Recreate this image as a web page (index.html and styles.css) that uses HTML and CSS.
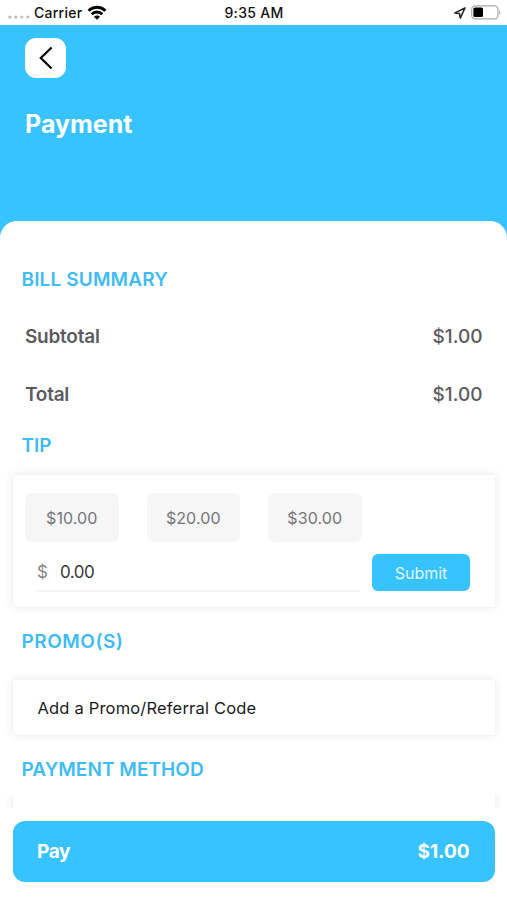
FILE: index.html
```html
<!DOCTYPE html>
<html lang="en">
<head>
<meta charset="utf-8">
<title>Payment</title>
<link rel="stylesheet" href="styles.css">
</head>
<body>
<div class="screen">
  <div class="status">
    <div class="status-left">
      <svg class="signal" width="22" height="4" viewBox="0 0 22 4" fill="#bdbdbd"><circle cx="1.8" cy="2" r="1.6"/><circle cx="7.8" cy="2" r="1.6"/><circle cx="13.8" cy="2" r="1.6"/><circle cx="19.8" cy="2" r="1.6"/></svg>
      <span class="carrier">Carrier</span>
      <svg class="wifi" width="20" height="15" viewBox="0 0 20 15" fill="none" stroke="#000" stroke-width="2.9"><path d="M1.6 5.7a12 12 0 0 1 16.8 0"/><path d="M4.7 9.2a7.6 7.6 0 0 1 10.6 0"/><path d="M10 14.8 6.9 11.7a4.4 4.4 0 0 1 6.2 0z" fill="#000" stroke="none"/></svg>
    </div>
    <span class="clock">9:35 AM</span>
    <div class="status-right">
      <svg width="12" height="12" viewBox="0 0 12 12" fill="none" stroke="#222" stroke-width="1.5" stroke-linejoin="round"><path d="M11 1 .9 5.9l4.6.7.8 4.5z"/></svg>
      <svg class="battery" width="30" height="15" viewBox="0 0 30 15"><rect x=".7" y=".8" width="26.2" height="13" rx="3.6" fill="#fff" stroke="#aaa" stroke-width="1.2"/><rect x="2.4" y="2.5" width="9.6" height="9.6" rx="1.6"/><path d="M28.2 5v4.6c1.6-.7 1.6-3.9 0-4.6z" fill="#aaa"/></svg>
    </div>
  </div>
  <header class="hero">
    <button class="back" aria-label="Back"><svg width="14" height="24" viewBox="0 0 14 24" fill="none" stroke="#000" stroke-width="2.2"><path d="M12.6 1.5 1.8 12l10.8 10.5"/></svg></button>
    <h1><span>Payment</span></h1>
  </header>
  <main class="sheet">
    <h2 class="bill">BILL SUMMARY</h2>
    <div class="line"><span class="label">Subtotal</span><span class="amount">$1.00</span></div>
    <div class="line"><span class="label">Total</span><span class="amount">$1.00</span></div>
    <h2 class="tip">TIP</h2>
    <section class="card tips">
      <div class="presets"><button>$10.00</button><button>$20.00</button><button>$30.00</button></div>
      <div class="custom">
        <div class="field"><span class="currency">$</span><span class="value">0.00</span></div>
        <button class="submit">Submit</button>
      </div>
    </section>
    <h2 class="promos">PROMO(S)</h2>
    <section class="card promo"><span>Add a Promo/Referral Code</span></section>
    <h2 class="method">PAYMENT METHOD</h2>
    <div class="methods-clip"><section class="card methods"></section></div>
  </main>
  <footer class="footer">
    <button class="pay"><span class="pay-label">Pay</span><span>$1.00</span></button>
  </footer>
</div>
</body>
</html>
```
FILE: styles.css
```css
* { box-sizing: border-box; }
body { margin: 0; background: #fff; font-family: Inter, "Liberation Sans", sans-serif; }
button { border: 0; padding: 0; font: inherit; color: inherit; }
h1, h2 { margin: 0; }
svg { display: block; flex: none; }
.screen { width: 507px; height: 900px; display: flex; flex-direction: column; overflow: hidden; background: #36c3ff; }
.status { height: 25px; flex: none; display: grid; grid-template-columns: 1fr auto 1fr; align-items: center; padding: 0 6px 0 8px; background: #fff; font-size: 14px; font-weight: 500; color: #111; }
.status-left { display: flex; align-items: center; }
.signal { margin-top: 8px; }
.carrier { margin-left: 4px; letter-spacing: .25px; }
.clock { letter-spacing: .3px; margin-right: 1px; }
.wifi { margin-left: 5px; }
.status-right { display: flex; align-items: center; justify-content: flex-end; gap: 5px; }
.hero { height: 196px; flex: none; padding: 13px 25px; }
.back { width: 41px; height: 40px; border-radius: 11px; background: #fff; display: flex; align-items: center; justify-content: center; }
h1 { margin-top: 29px; font-size: 25px; line-height: 34px; font-weight: 700; color: #fff; }
.sheet { flex: 1; min-height: 0; overflow: hidden; background: #fff; border-radius: 17px 17px 0 0; padding: 44px 12.5px 0; }
h2 { height: 30px; line-height: 30px; padding-left: 9px; font-size: 19px; font-weight: 600; color: #3fbcf8; }
.line { height: 58.5px; display: flex; align-items: center; justify-content: space-between; padding: 0 12px 0 12.5px; color: #5c5a60; font-size: 19px; }
.bill { margin-bottom: 12px; letter-spacing: .15px; }
.label { font-weight: 600; letter-spacing: -.25px; }
.amount { font-weight: 500; }
.tip { margin: 7px 0 14px; }
.card { background: #fff; box-shadow: 0 0 9px rgba(0, 0, 0, .1); }
.tips { height: 132px; padding: 18px 24.5px 0 12.5px; }
.presets { display: flex; gap: 28px; }
.presets button { width: 93.5px; height: 49px; border-radius: 7px; background: #f6f6f7; color: #75757a; font-size: 16px; font-weight: 400; letter-spacing: .1px; }
.custom { display: flex; justify-content: space-between; margin-top: 12px; padding-left: 11px; }
.field { width: 324px; height: 38px; display: flex; align-items: center; gap: 12px; padding-left: 1px; border-bottom: 2px solid #f4f4f5; font-size: 17px; color: #39393d; }
.value { letter-spacing: -.5px; }
.currency { color: #85858a; }
.submit { width: 98px; height: 37px; border-radius: 6px; background: #36c3ff; color: #e0f7ff; font-size: 16px; }
.promos { margin: 20px 0 23px; letter-spacing: .5px; }
.promo { height: 55px; display: flex; align-items: center; padding-left: 25px; font-size: 16.5px; letter-spacing: .18px; color: #1b1b1d; }
.method { margin: 20px 0 9px; letter-spacing: .05px; }
.methods-clip { margin: 0 -12.5px; padding: 0 12.5px; height: 60px; overflow: hidden; }
.methods { height: 60px; }
.footer { height: 92px; flex: none; background: #fff; padding: 13px 12.5px 0 13px; }
.pay { width: 100%; height: 60.5px; border-radius: 12px; background: #36c3ff; color: #fff; font-size: 19px; font-weight: 700; display: flex; align-items: center; justify-content: space-between; padding: 0 25px 0 24px; }
.pay-label { letter-spacing: -.4px; }
```
